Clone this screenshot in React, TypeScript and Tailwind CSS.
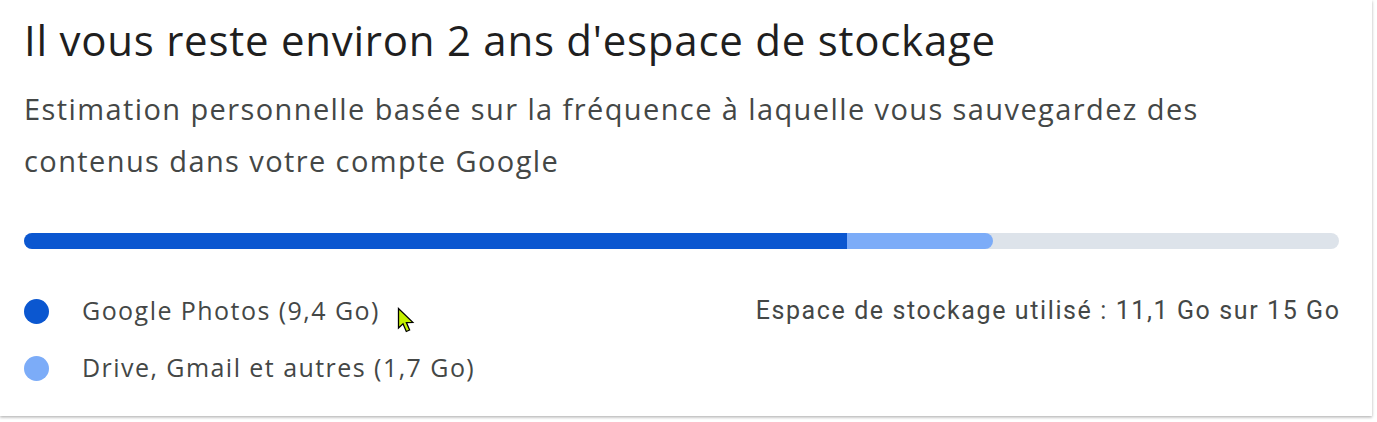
import React from "react";

function Cursor() {
  return (
    <svg
      className="absolute left-[396px] top-[306px]"
      width="22"
      height="30"
      viewBox="0 0 22 30"
    >
      <path
        d="M2.5 2.5 L2.5 22 L7 17.8 L10.3 25.5 L13.6 24 L10.4 16.5 L16.8 16.3 Z"
        fill="#c4f000"
        stroke="#000"
        strokeWidth="1.3"
        strokeLinejoin="miter"
      />
    </svg>
  );
}

export default function App() {
  return (
    <div className="relative w-[1377px] h-[422px] bg-white overflow-hidden">
      <div className="w-[1372px] h-[416px] bg-white shadow-[0_1px_3px_rgba(0,0,0,0.25),0_2px_2px_rgba(0,0,0,0.08)] pl-[24px] pr-[33px] pt-[13px]">
        <h1
          className="text-[42px] leading-[54px] tracking-[0.75px] text-[#1f1f1f] font-normal whitespace-nowrap"
          style={{ fontFamily: '"Open Sans", sans-serif' }}
        >
          Il vous reste environ 2 ans d'espace de stockage
        </h1>
        <p
          className="mt-[16px] text-[29px] leading-[52px] tracking-[1.4px] text-[#444746] whitespace-nowrap"
          style={{ fontFamily: '"Open Sans", sans-serif' }}
        >
          Estimation personnelle basée sur la fréquence à laquelle vous sauvegardez des
          <br />
          contenus dans votre compte Google
        </p>
        <div className="mt-[46px] flex h-[16px] w-full rounded-full bg-[#dde3ea] overflow-hidden">
          <div className="w-[823px] h-full bg-[#0b57d0]" />
          <div className="w-[146px] h-full bg-[#7cacf8] rounded-r-full" />
        </div>
        <div className="mt-[46px] flex justify-between">
          <div className="flex flex-col gap-[25px]">
            <div className="flex items-center h-[32px]">
              <span className="w-[25px] h-[25px] rounded-full bg-[#0b57d0]" />
              <span
                className="ml-[33px] text-[25px] tracking-[1.45px] text-[#444746]"
                style={{ fontFamily: '"Open Sans", sans-serif' }}
              >
                Google Photos (9,4 Go)
              </span>
            </div>
            <div className="flex items-center h-[32px]">
              <span className="w-[25px] h-[25px] rounded-full bg-[#7cacf8]" />
              <span
                className="ml-[33px] text-[25px] tracking-[1.45px] text-[#444746]"
                style={{ fontFamily: '"Open Sans", sans-serif' }}
              >
                Drive, Gmail et autres (1,7 Go)
              </span>
            </div>
          </div>
          <div
            className="h-[32px] flex items-center text-[25px] tracking-[1.6px] text-[#444746] -mr-[1.6px]"
            style={{ fontFamily: "Roboto, sans-serif" }}
          >
            Espace de stockage utilisé : 11,1 Go sur 15 Go
          </div>
        </div>
      </div>
      <Cursor />
    </div>
  );
}
